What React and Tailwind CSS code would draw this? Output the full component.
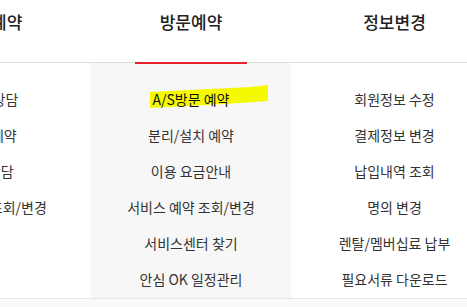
const columns = [
  {
    title: '구매예약',
    items: ['렌탈 상담', '상담예약', '1:1상담', '상담예약 조회/변경'],
  },
  {
    title: '방문예약',
    active: true,
    items: ['A/S방문 예약', '분리/설치 예약', '이용 요금안내', '서비스 예약 조회/변경', '서비스센터 찾기', '안심 OK 일정관리'],
  },
  {
    title: '정보변경',
    shift: true,
    items: ['회원정보 수정', '결제정보 변경', '납입내역 조회', '명의 변경', '렌탈/멤버십료 납부', '필요서류 다운로드'],
  },
]

function Highlight(){
  return (
    <svg className="absolute left-[59px] top-[4px] w-[118px] h-[24px]" viewBox="0 0 118 24" preserveAspectRatio="none">
      <polygon points="0,7 60,4 100,2 118,0 118,16 90,18 40,21 0,23" fill="#f5fa00" />
    </svg>
  )
}

export default function App(){
  return (
    <div className="w-[467px] h-[307px] overflow-hidden bg-[#fafafa] font-['Noto_Sans_CJK_KR','Noto_Sans',sans-serif]">
      <div className="bg-white">
        <div className="flex ml-[-109px] h-[62px] border-b border-[#dedede] box-content">
          {columns.map(col => (
            <div key={col.title} className={`relative w-[200px] shrink-0 flex justify-center pt-[9px] ${col.shift ? 'pl-[7px]' : ''}`}>
              <span className="text-[17px] leading-[26px] font-medium text-[#222]">{col.title}</span>
              {col.active && <div className="absolute left-[44px] bottom-[-2px] w-[112px] h-[2px] bg-[#e8232b]" />}
            </div>
          ))}
        </div>
        <div className="flex ml-[-109px] h-[235px] border-b border-[#e6e6e6] box-content">
          {columns.map(col => (
            <div key={col.title} className={`w-[200px] shrink-0 pt-[18px] ${col.active ? 'bg-[#f7f7f7]' : 'bg-white'} ${col.shift ? 'pl-[7px]' : ''}`}>
              {col.items.map((it, i) => (
                <div key={it} className="relative h-[36px] flex items-center justify-center">
                  {col.active && i === 0 && <Highlight />}
                  <span className={`relative text-[14px] ${col.active && i === 0 ? 'text-[#111]' : 'text-[#333]'}`}>{it}</span>
                </div>
              ))}
            </div>
          ))}
        </div>
      </div>
    </div>
  )
}
